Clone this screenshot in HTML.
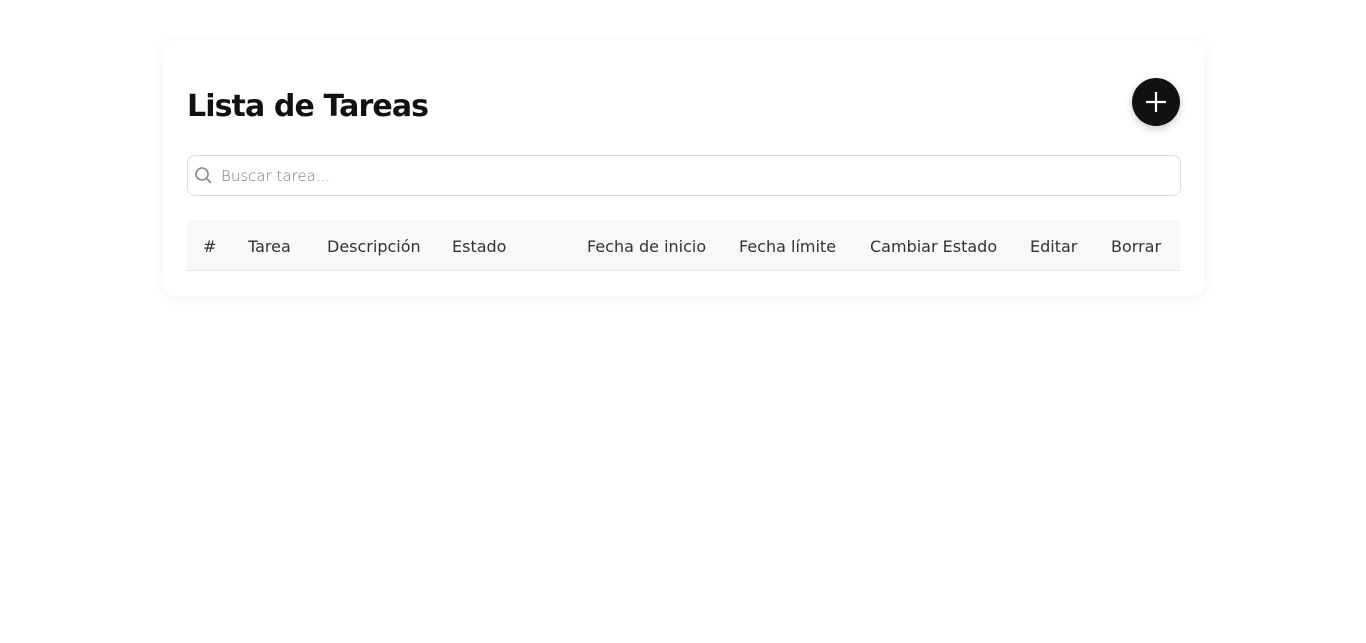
<!DOCTYPE html>
<html><head><meta charset="utf-8"><style>
body{margin:0;background:#fff;font-family:"DejaVu Sans","Liberation Sans",sans-serif;}
.card{position:absolute;left:163px;top:40px;width:1041px;height:256px;background:#fff;border-radius:12px;box-shadow:0 2px 14px rgba(0,0,0,0.06);}
h1{position:absolute;left:187px;top:87px;margin:0;font-size:30px;font-weight:bold;color:#111;line-height:40px;letter-spacing:-0.9px}
.add{position:absolute;left:1132px;top:78px;width:48px;height:48px;border-radius:50%;background:#111;box-shadow:0 3px 8px rgba(0,0,0,0.2)}
.search{position:absolute;left:187px;top:155px;width:992px;height:39px;border:1px solid #ddd;border-radius:8px}
.ph{position:absolute;left:221px;top:166px;font-size:15px;color:#777;font-weight:200;line-height:20px}
.thead{position:absolute;left:187px;top:220px;width:993px;height:50px;background:#f8f8f8;border-bottom:1px solid #e5e5e5}
.th{position:absolute;top:237px;font-size:16px;color:#333;line-height:20px;white-space:nowrap}
</style></head><body>
<div class="card"></div>
<h1>Lista de Tareas</h1>
<div class="add"><svg width="48" height="48"><path d="M24 14V34M14 24H34" stroke="#fff" stroke-width="2.2"/></svg></div>
<div class="search"></div>
<svg style="position:absolute;left:194px;top:166px" width="20" height="20"><circle cx="8" cy="8" r="6" fill="none" stroke="#888" stroke-width="1.6"/><path d="M12.5 12.5L17 17" stroke="#888" stroke-width="1.8"/></svg>
<div class="ph">Buscar tarea...</div>
<div class="thead"></div>
<div class="th" style="left:203px">#</div>
<div class="th" style="left:248px">Tarea</div>
<div class="th" style="left:327px">Descripción</div>
<div class="th" style="left:452px">Estado</div>
<div class="th" style="left:587px">Fecha de inicio</div>
<div class="th" style="left:739px">Fecha límite</div>
<div class="th" style="left:870px">Cambiar Estado</div>
<div class="th" style="left:1030px">Editar</div>
<div class="th" style="left:1111px">Borrar</div>
</body></html>
